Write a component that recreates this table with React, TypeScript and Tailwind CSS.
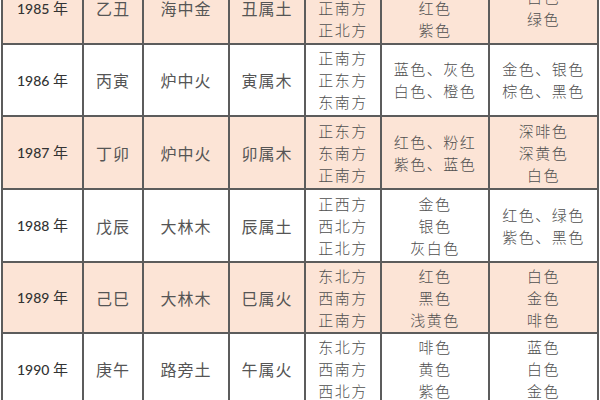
import React from "react";

type Row = {
  year: string;
  ganzhi: string;
  nayin: string;
  shu: string;
  dirs: string[];
  lucky: string[];
  other: string[];
  shade: boolean;
  h: string;
};

const rows: Row[] = [
  { year: "1985", ganzhi: "乙丑", nayin: "海中金", shu: "丑属土", dirs: ["西南方", "正南方", "正北方"], lucky: ["黄色", "红色", "紫色"], other: ["白色", "绿色"], shade: true, h: "h-[72px]" },
  { year: "1986", ganzhi: "丙寅", nayin: "炉中火", shu: "寅属木", dirs: ["正南方", "正东方", "东南方"], lucky: ["蓝色、灰色", "白色、橙色"], other: ["金色、银色", "棕色、黑色"], shade: false, h: "h-[72px]" },
  { year: "1987", ganzhi: "丁卯", nayin: "炉中火", shu: "卯属木", dirs: ["正东方", "东南方", "正南方"], lucky: ["红色、粉红", "紫色、蓝色"], other: ["深啡色", "深黄色", "白色"], shade: true, h: "h-[73px]" },
  { year: "1988", ganzhi: "戊辰", nayin: "大林木", shu: "辰属土", dirs: ["正西方", "西北方", "正北方"], lucky: ["金色", "银色", "灰白色"], other: ["红色、绿色", "紫色、黑色"], shade: false, h: "h-[73px]" },
  { year: "1989", ganzhi: "己巳", nayin: "大林木", shu: "巳属火", dirs: ["东北方", "西南方", "正南方"], lucky: ["红色", "黑色", "浅黄色"], other: ["白色", "金色", "啡色"], shade: true, h: "h-[71px]" },
  { year: "1990", ganzhi: "庚午", nayin: "路旁土", shu: "午属火", dirs: ["东北方", "西南方", "西北方"], lucky: ["啡色", "黄色", "紫色"], other: ["蓝色", "白色", "金色"], shade: false, h: "h-[72px]" },
];

const cell = "flex flex-col items-center justify-center border-r-2 border-b-2 border-[#5c5c5c] text-center";
const sans = "font-['Noto_Sans_CJK_SC',sans-serif] text-[16px] font-normal tracking-[1px] text-[#555]";
const serif = "font-['Noto_Sans_CJK_SC',serif] text-[15px] font-light leading-[22px] tracking-[1.5px] text-[#505050]";

function Lines({ items }: { items: string[] }) {
  return (
    <>
      {items.map((t, i) => (
        <span key={i}>{t}</span>
      ))}
    </>
  );
}

export default function App() {
  return (
    <div lang="zh-CN" className="h-[400px] w-[600px] overflow-hidden bg-white antialiased">
      <div className="ml-[1px] mt-[-27px] grid grid-cols-[81px_60px_86px_76px_76px_108px_109px] border-l-2 border-[#5c5c5c]">
        {rows.map((r) => {
          const bg = r.shade ? "bg-[#fce4d6]" : "bg-white";
          return (
            <React.Fragment key={r.year}>
              <div className={`${cell} ${bg} ${r.h} font-['Lato','Noto_Sans_CJK_SC',sans-serif] text-[14px] font-medium text-[#333]`}>
                <span>
                  {r.year} <span className="text-[15px] font-normal">年</span>
                </span>
              </div>
              <div className={`${cell} ${bg} ${sans}`}>{r.ganzhi}</div>
              <div className={`${cell} ${bg} font-['Noto_Sans_CJK_JP','Noto_Sans_CJK_SC',sans-serif] text-[16px] font-normal tracking-[1px] text-[#555]`}>
                {r.nayin}
              </div>
              <div className={`${cell} ${bg} ${sans}`}>{r.shu}</div>
              <div className={`${cell} ${bg} ${serif}`}>
                <Lines items={r.dirs} />
              </div>
              <div className={`${cell} ${bg} ${serif}`}>
                <Lines items={r.lucky} />
              </div>
              <div className={`${cell} ${bg} ${serif}`}>
                <Lines items={r.other} />
              </div>
            </React.Fragment>
          );
        })}
      </div>
    </div>
  );
}
